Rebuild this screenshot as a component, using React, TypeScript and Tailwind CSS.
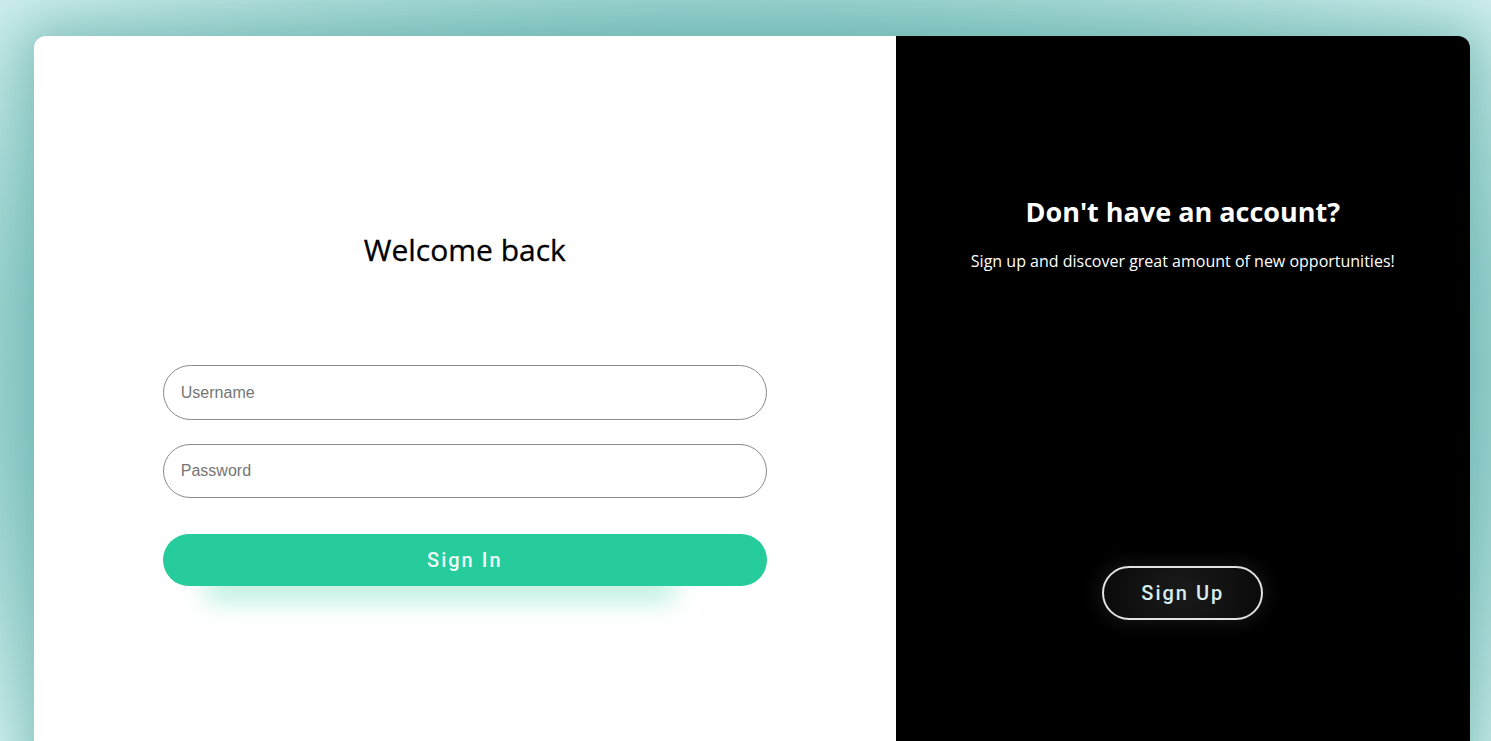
import * as React from "react"

// Login screen: two-panel card over a teal glow
export default function App() {
    return (
        <div className="min-h-screen h-[741px] overflow-hidden bg-[radial-gradient(ellipse_at_center,#5fb1ac_0%,#86c7c3_60%,#cdeeec_100%)] pt-[36px] pl-[34px] pr-[21px]">
            <div className="flex h-[760px] rounded-t-xl overflow-hidden shadow-[0_0_50px_10px_rgba(95,170,165,0.6)]">
                {/* Sign in panel */}
                <div className="w-[60%] bg-white flex flex-col items-center pt-[196px]">
                    <h2 className="text-[30px] leading-[36px] text-black font-['Open_Sans',sans-serif] [-webkit-text-stroke:0.3px_black]">
                        Welcome back
                    </h2>
                    <form className="mt-[97px] w-[604px] flex flex-col" onSubmit={(e) => e.preventDefault()}>
                        <input
                            type="text"
                            placeholder="Username"
                            className="h-[55px] rounded-full border border-[#8a8a8a] px-[17px] text-[16px] font-['Liberation_Sans',Arial,sans-serif] placeholder:text-[#757575] outline-none"
                        />
                        <input
                            type="password"
                            placeholder="Password"
                            className="mt-[24px] h-[54px] rounded-full border border-[#8a8a8a] px-[17px] text-[16px] font-['Liberation_Sans',Arial,sans-serif] placeholder:text-[#757575] outline-none"
                        />
                        <div className="relative mt-[36px]">
                            {/* soft green shadow under the button */}
                            <div className="absolute left-[40px] right-[90px] top-[38px] h-[30px] rounded-full bg-[rgba(38,204,155,0.3)] blur-[12px]" />
                            <button
                                type="submit"
                                className="relative w-full h-[52px] rounded-full bg-[#26cc9b] text-[#eefbf7] text-[20px] font-medium tracking-[2px] font-['Roboto',sans-serif]"
                            >
                                Sign In
                            </button>
                        </div>
                    </form>
                </div>

                {/* Sign up panel */}
                <div className="w-[40%] bg-black flex flex-col items-center pt-[160px] text-white font-['Open_Sans',sans-serif]">
                    <h2 className="text-[27px] leading-[32px] font-bold">Don't have an account?</h2>
                    <p className="mt-[21px] text-[16px] leading-[24px]">
                        Sign up and discover great amount of new opportunities!
                    </p>
                    <button className="mt-[293px] w-[161px] h-[54px] rounded-full border-2 border-[#e2e2e2] bg-[radial-gradient(circle,#1a1a1a_0%,#0a0a0a_100%)] text-[#d8eeee] text-[20px] font-medium tracking-[2px] font-['Roboto',sans-serif] shadow-[0_0_18px_4px_rgba(255,255,255,0.08)]">
                        Sign Up
                    </button>
                </div>
            </div>
        </div>
    )
}
